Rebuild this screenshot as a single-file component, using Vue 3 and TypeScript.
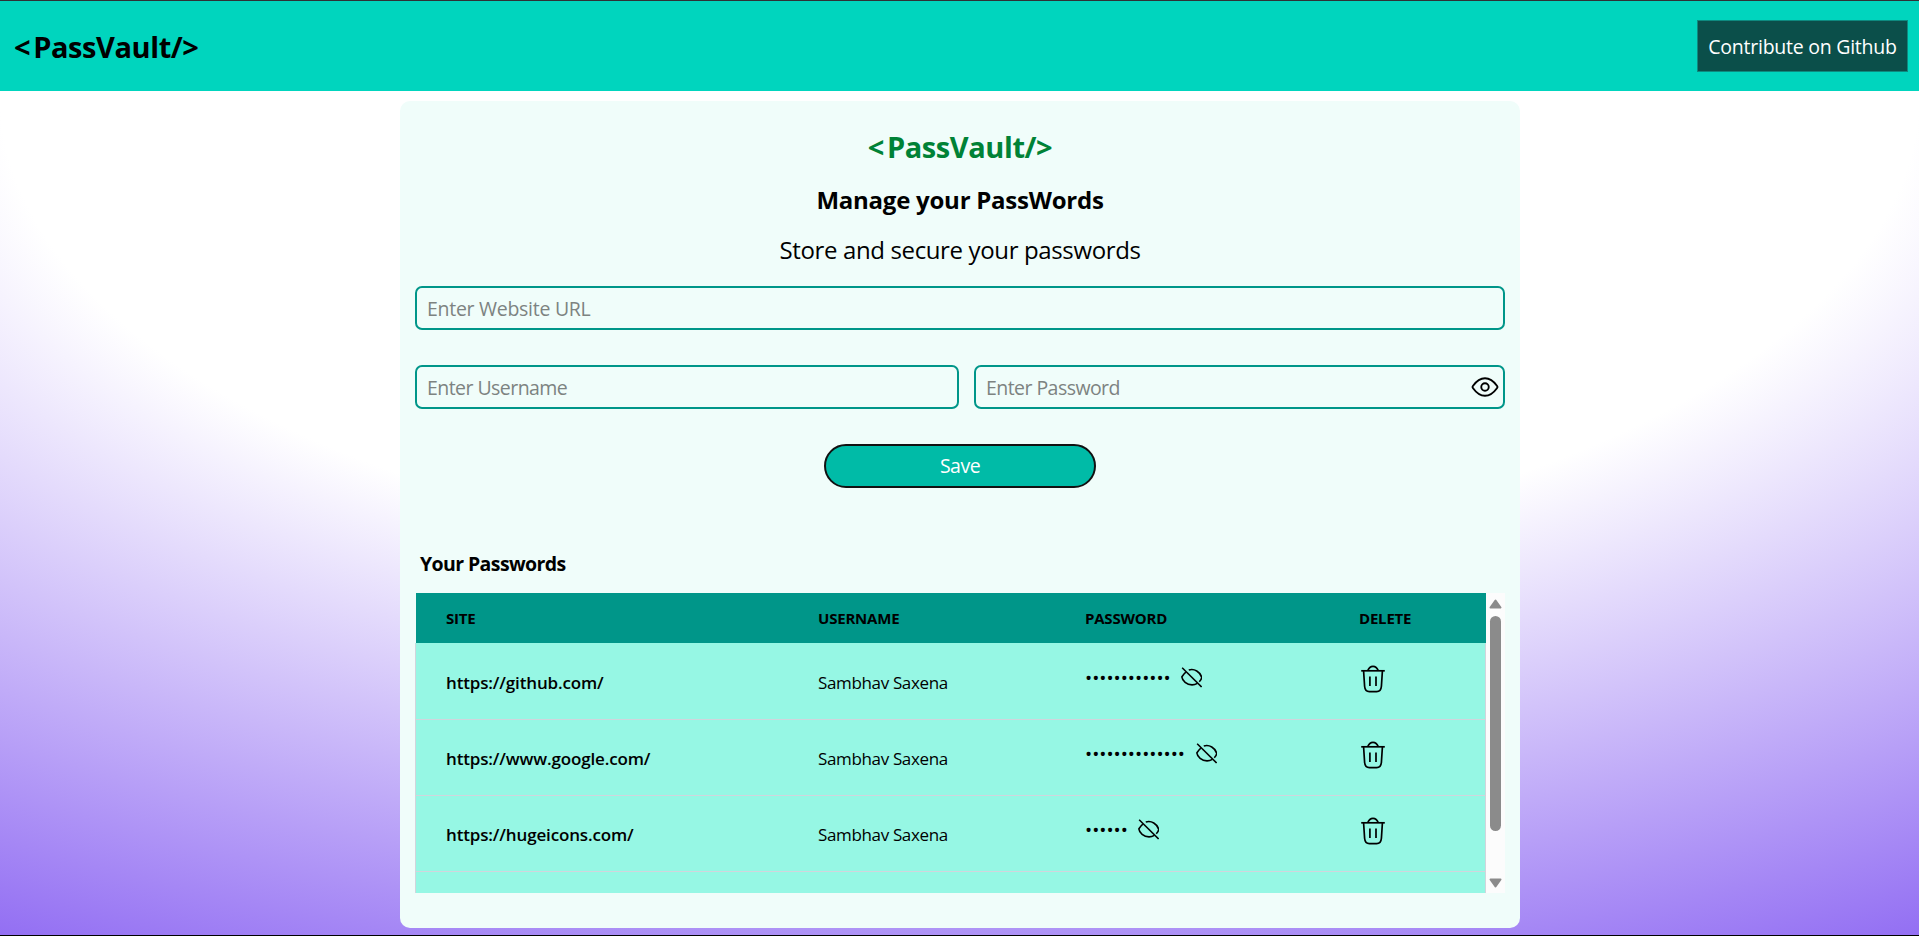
<script setup lang="ts">
interface Entry {
  site: string
  username: string
  length: number
}

const entries: Entry[] = [
  { site: 'https://github.com/', username: 'Sambhav Saxena', length: 12 },
  { site: 'https://www.google.com/', username: 'Sambhav Saxena', length: 14 },
  { site: 'https://hugeicons.com/', username: 'Sambhav Saxena', length: 6 },
]

const mask = (n: number): string => '•'.repeat(n)
</script>

<template>
  <div class="page">
    <nav class="nav">
      <div class="brand"><span class="open">&lt;</span>PassVault/&gt;</div>
      <button class="contribute" type="button">Contribute on Github</button>
    </nav>

    <main class="card">
      <h1 class="title"><span class="open">&lt;</span>PassVault/&gt;</h1>
      <h2 class="subtitle">Manage your PassWords</h2>
      <p class="lead">Store and secure your passwords</p>

      <div class="form">
        <input class="field url" type="text" placeholder="Enter Website URL" />
        <div class="pair">
          <input class="field user" type="text" placeholder="Enter Username" />
          <div class="secret">
            <input class="field pass" type="password" placeholder="Enter Password" />
            <svg class="eye" viewBox="0 0 24 24">
              <path d="M21.544 11.045C21.848 11.4713 22 11.6845 22 12C22 12.3155 21.848 12.5287 21.544 12.955C20.1779 14.8706 16.6892 19 12 19C7.31078 19 3.8221 14.8706 2.45604 12.955C2.15201 12.5287 2 12.3155 2 12C2 11.6845 2.15201 11.4713 2.45604 11.045C3.8221 9.12944 7.31078 5 12 5C16.6892 5 20.1779 9.12944 21.544 11.045Z" />
              <circle cx="12" cy="12" r="3" />
            </svg>
          </div>
        </div>
        <button class="save" type="button">Save</button>
      </div>

      <h3 class="list-title">Your Passwords</h3>
      <div class="viewport">
        <div class="table">
          <div class="row head">
            <span>SITE</span>
            <span>USERNAME</span>
            <span>PASSWORD</span>
            <span>DELETE</span>
          </div>
          <div v-for="entry in entries" :key="entry.site" class="row item">
            <span class="site">{{ entry.site }}</span>
            <span class="username">{{ entry.username }}</span>
            <span class="password">
              <span class="dots">{{ mask(entry.length) }}</span>
              <svg class="off" viewBox="0 0 20 20">
                <path d="M4.6 4.9C2.9 6.2 1.6 8.2 .8 9.4C1.2 13 5.5 17 10.5 17C12.6 17 14.2 16.4 15.6 15.6" />
                <path d="M7.4 2.9C12.8 1.2 18.2 4.6 19.8 10C19.5 11.4 18.6 12.8 17.4 14" />
                <path d="M1.1 .7L19.6 19.1" />
              </svg>
            </span>
            <span class="delete">
              <svg class="bin" viewBox="0 0 24 28">
                <path d="M.2 5.8H23.8" />
                <path d="M6.9 5.4C7.8 2.8 9.1 1.3 12 1.3C14.9 1.3 16.2 2.8 17.1 5.4" />
                <path d="M2.6 6L3.6 21.2C3.9 25 5.2 26.6 8.4 26.6H15.6C18.8 26.6 20.1 25 20.4 21.2L21.4 6" />
                <path d="M8.9 11.6V21M15 11.6V21" />
              </svg>
            </span>
          </div>
          <div class="row item"></div>
        </div>
        <div class="scrollbar">
          <svg class="arrow" viewBox="0 0 13 10"><path d="M6.5 1.5L11.5 8.5H1.5Z" /></svg>
          <div class="thumb"></div>
          <svg class="arrow" viewBox="0 0 13 10"><path d="M6.5 8.5L1.5 1.5H11.5Z" /></svg>
        </div>
      </div>
    </main>
  </div>
</template>

<style>
body {
  overflow: hidden;
}
</style>

<style scoped>
* {
  box-sizing: border-box;
  margin: 0;
}

.page {
  width: 1919px;
  height: 936px;
  overflow: hidden;
  border-top: 1px solid #2f3136;
  border-bottom: 1px solid #000;
  background: radial-gradient(125% 125% at 50% 10%, #fff 40%, #63e 100%);
  font-family: "Segoe UI", "Open Sans", "Noto Sans", sans-serif;
  color: #000;
}

.nav {
  height: 90px;
  display: flex;
  align-items: center;
  justify-content: space-between;
  padding: 0 11px 0 14px;
  background: #00d5be;
}

.brand,
.title {
  font-size: 29px;
  line-height: 36px;
  font-weight: 700;
  letter-spacing: -0.42px;
  white-space: nowrap;
}

.brand {
  padding-top: 2px;
}

.open {
  margin-right: 3px;
}

.contribute {
  width: 211px;
  height: 52px;
  border: 1px solid #0e8a7f;
  background: #0b4f4a;
  color: #fff;
  font: 400 19.5px/30px "Segoe UI", "Open Sans", sans-serif;
  letter-spacing: -0.25px;
  padding: 1px 0 0;
  white-space: nowrap;
}

.card {
  width: 1120px;
  height: 827px;
  margin: 10px auto 0 400px;
  padding: 28px 15px 0;
  border-radius: 10px;
  background: #f0fdfa;
  text-align: center;
}

.title {
  color: #008236;
}

.subtitle {
  margin-top: 19px;
  font-size: 24px;
  line-height: 32px;
  font-weight: 700;
  letter-spacing: -0.24px;
}

.lead {
  margin-top: 18px;
  font-size: 24px;
  line-height: 32px;
  letter-spacing: -0.36px;
}

.form {
  margin-top: 20px;
}

.field {
  display: block;
  height: 44px;
  width: 100%;
  padding: 0 10px;
  border: 2px solid #009689;
  border-radius: 7px;
  background: transparent;
  font: 400 19.5px/30px "Segoe UI", "Open Sans", sans-serif;
  letter-spacing: -0.55px;
}

.field::placeholder {
  color: #7d8381;
  opacity: 1;
}

.url {
  letter-spacing: -0.28px;
}

.pair {
  display: flex;
  gap: 15px;
  margin-top: 35px;
}

.user {
  flex: none;
  width: 544px;
}

.secret {
  position: relative;
  flex: 1;
}

.eye {
  position: absolute;
  right: 5px;
  top: 7px;
  width: 30px;
  height: 30px;
  fill: none;
  stroke: #000;
  stroke-width: 1.5;
}

.save {
  display: block;
  width: 272px;
  height: 44px;
  margin: 35px auto 0;
  border: 2px solid #111;
  border-radius: 22px;
  background: #00bba7;
  color: #fff;
  font: 400 19.5px/30px "Segoe UI", "Open Sans", sans-serif;
  letter-spacing: -0.5px;
}

.list-title {
  margin: 61px 0 0 5px;
  height: 30px;
  text-align: left;
  font-size: 19.5px;
  line-height: 30px;
  font-weight: 700;
  letter-spacing: -0.6px;
}

.viewport {
  display: flex;
  width: 1090px;
  height: 300px;
  margin-top: 14px;
  overflow: hidden;
}

.table {
  width: 1071px;
  height: 300px;
  overflow: hidden;
}

.row {
  display: grid;
  grid-template-columns: 372px 267px 274px 1fr;
  padding-left: 30px;
  text-align: left;
}

.head {
  height: 50px;
  margin-left: 1px;
  background: #009689;
  align-items: center;
  font-size: 15px;
  font-weight: 700;
  letter-spacing: -0.2px;
}

.item {
  height: 76px;
  background: #96f7e4;
  border: 1px solid #d1d5dc;
  border-bottom: 0;
  white-space: nowrap;
}

.head + .item {
  border-top-color: #96f7e4;
}

.site,
.username {
  padding-top: 26px;
  font-size: 17px;
  line-height: 26px;
}

.site {
  font-weight: 600;
  letter-spacing: -0.15px;
}

.username {
  letter-spacing: -0.35px;
}

.password {
  display: flex;
  align-items: flex-start;
  padding-top: 23px;
}

.dots {
  font-size: 19px;
  line-height: 22px;
}

.off {
  width: 21px;
  height: 21px;
  margin-left: 10.5px;
  fill: none;
  stroke: #000;
  stroke-width: 1.5;
}

.delete {
  padding: 21px 0 0 2px;
}

.bin {
  width: 24px;
  height: 28px;
  fill: none;
  stroke: #000;
  stroke-width: 1.7;
}

.scrollbar {
  width: 19px;
  display: flex;
  flex-direction: column;
  align-items: center;
  justify-content: space-between;
  padding: 6px 0 5px;
  background: #fcfcfc;
}

.arrow {
  width: 13px;
  height: 10px;
  fill: #8b8b8b;
  stroke: #8b8b8b;
  stroke-width: 2;
  stroke-linejoin: round;
}

.thumb {
  width: 11px;
  height: 215px;
  margin-bottom: 40px;
  border-radius: 6px;
  background: #8b8b8b;
}
</style>
